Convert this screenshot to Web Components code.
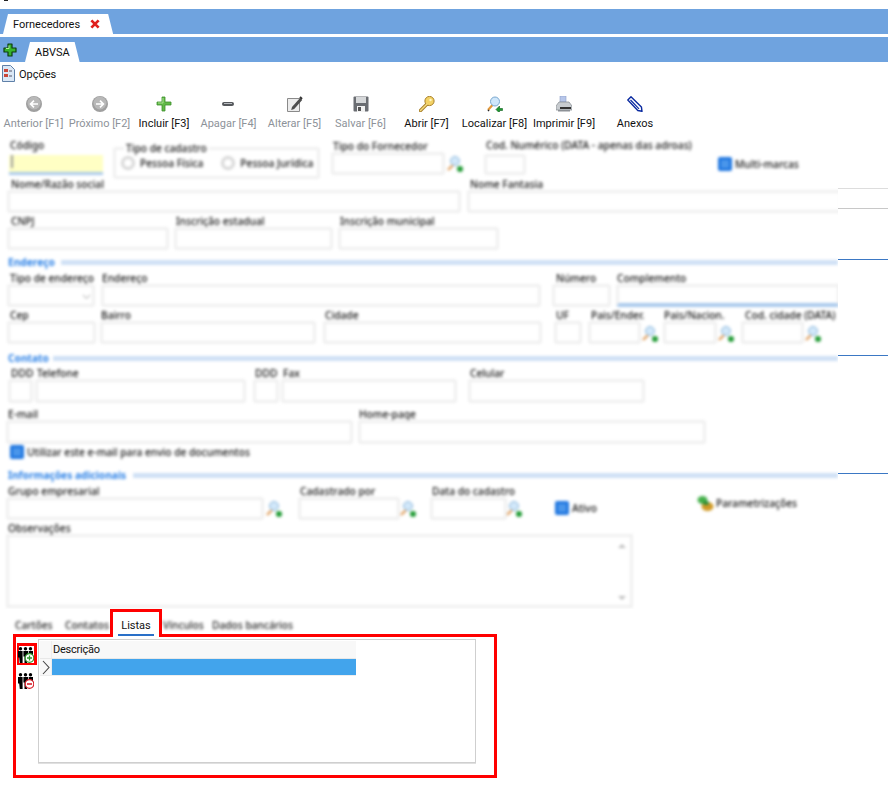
<!DOCTYPE html>
<html><head><meta charset="utf-8"><title>Fornecedores</title>
<style>
html,body{margin:0;padding:0;background:#fff}
body{width:888px;height:804px;overflow:hidden;font-family:Roboto,"Liberation Sans",sans-serif;font-size:11px;color:#111}
x-app{display:block}
</style></head><body>
<x-app>
  <x-tabbar first><x-doctab closable>Fornecedores</x-doctab></x-tabbar>
  <x-tabbar><x-icon name="addgreen" slot="lead"></x-icon><x-doctab>ABVSA</x-doctab></x-tabbar>
  <x-options>Opções</x-options>
  <x-toolbar>
    <x-tool w="67" off><x-icon name="left" slot="icon"></x-icon>Anterior [F1]</x-tool>
    <x-tool w="65" off><x-icon name="right" slot="icon"></x-icon>Próximo [F2]</x-tool>
    <x-tool w="64"><x-icon name="plus" slot="icon"></x-icon>Incluir [F3]</x-tool>
    <x-tool w="65" off><x-icon name="minus" slot="icon"></x-icon>Apagar [F4]</x-tool>
    <x-tool w="67" off><x-icon name="edit" slot="icon"></x-icon>Alterar [F5]</x-tool>
    <x-tool w="65" off><x-icon name="save" slot="icon"></x-icon>Salvar [F6]</x-tool>
    <x-tool w="67"><x-icon name="key" slot="icon"></x-icon>Abrir [F7]</x-tool>
    <x-tool w="69"><x-icon name="find" slot="icon"></x-icon>Localizar [F8]</x-tool>
    <x-tool w="70"><x-icon name="print" slot="icon"></x-icon>Imprimir [F9]</x-tool>
    <x-tool w="72"><x-icon name="clip" slot="icon"></x-icon>Anexos</x-tool>
  </x-toolbar>
  <x-main>
    <x-form>
      <x-row h="39">
        <x-field w="94" ml="9" lx="1" gap="4" bh="20" kind="active">Código</x-field>
        <x-group ml="10" mt="7" w="207" legend="Tipo de cadastro"><x-radio ml="5" tw="61">Pessoa Física</x-radio><x-radio ml="18" tw="74">Pessoa Jurídica</x-radio></x-group>
        <x-field w="114" ml="11" mt="1" lx="2" bh="23">Tipo do Fornecedor</x-field>
        <x-lens ml="2" mt="15"></x-lens>
        <x-field w="42" ml="21" lx="2" gap="3" bh="21">Cod. Numérico (DATA - apenas das adroas)</x-field>
        <x-check ml="192" mt="17">Multi-marcas</x-check>
      </x-row>
      <x-row h="34">
        <x-field w="454" ml="7" lx="4">Nome/Razão social</x-field>
        <x-field w="376" ml="6" lx="3">Nome Fantasia</x-field>
      </x-row>
      <x-row h="34" mt="3">
        <x-field w="162" ml="7" lx="4">CNPJ</x-field>
        <x-field w="159" ml="5" lx="2">Inscrição estadual</x-field>
        <x-field w="161" ml="5" lx="2">Inscrição municipal</x-field>
      </x-row>
      <x-section mt="6" gap="6">Endereço</x-section>
      <x-row h="34" mt="5">
        <x-field w="88" ml="7" lx="3" kind="combo">Tipo de endereço</x-field>
        <x-field w="440" ml="6" lx="1">Endereço</x-field>
        <x-field w="59" ml="11" lx="4">Número</x-field>
        <x-field w="224" ml="5" lx="1" kind="bar">Complemento</x-field>
      </x-row>
      <x-row h="34" mt="3">
        <x-field w="89" ml="7" lx="3">Cep</x-field>
        <x-field w="216" ml="4" lx="1">Bairro</x-field>
        <x-field w="219" ml="7" lx="2">Cidade</x-field>
        <x-field w="28" ml="12" lx="2">UF</x-field>
        <x-field w="53" ml="6" lx="3">Pais/Ender.</x-field>
        <x-lens ml="1" mt="15"></x-lens>
        <x-field w="54" ml="5" lx="1">Pais/Nacion.</x-field>
        <x-lens ml="1" mt="15"></x-lens>
        <x-field w="63" ml="7" lx="4">Cod. cidade (DATA)</x-field>
        <x-lens ml="1" mt="15"></x-lens>
      </x-row>
      <x-section mt="8" gap="4">Contato</x-section>
      <x-row h="35" mt="4">
        <x-field w="25" ml="8" lx="3" bh="24">DDD</x-field>
        <x-field w="211" ml="2" lx="2" bh="24">Telefone</x-field>
        <x-field w="26" ml="7" lx="2" bh="24">DDD</x-field>
        <x-field w="176" ml="2" lx="2" bh="24">Fax</x-field>
        <x-field w="177" ml="11" lx="2" bh="24">Celular</x-field>
      </x-row>
      <x-row h="35" mt="6">
        <x-field w="347" ml="6" lx="2" bh="24">E-mail</x-field>
        <x-field w="348" ml="5" lx="1" bh="24">Home-page</x-field>
      </x-row>
      <x-row h="14" mt="1"><x-check ml="10">Utilizar este e-mail para envio de documentos</x-check></x-row>
      <x-section mt="10" gap="7">Informações adicionais</x-section>
      <x-row h="34" mt="5">
        <x-field w="258" ml="6" lx="2">Grupo empresarial</x-field>
        <x-lens ml="2" mt="14"></x-lens>
        <x-field w="102" ml="16" lx="2">Cadastrado por</x-field>
        <x-lens ml="0" mt="14"></x-lens>
        <x-field w="77" ml="14" lx="2">Data do cadastro</x-field>
        <x-lens ml="-1" mt="14"></x-lens>
        <x-check ml="33" mt="15">Ativo</x-check>
        <x-param ml="100" mt="9">Parametrizações</x-param>
      </x-row>
      <x-memo mt="3" ml="6" w="627">Observações</x-memo>
    </x-form>
    <x-gutter></x-gutter>
  </x-main>
  <x-tabs>
    <x-tab ml="15" w="37">Cartões</x-tab>
    <x-tab ml="13" w="43">Contatos</x-tab>
    <x-tab ml="2" active w="52">Listas</x-tab>
    <x-tab ml="1" w="37">Vínculos</x-tab>
    <x-tab ml="12" w="80">Dados bancários</x-tab>
  </x-tabs>
  <x-panel>
    <x-iconbtn marked slot="tools"><x-icon name="groupadd"></x-icon></x-iconbtn>
    <x-iconbtn slot="tools"><x-icon name="groupdel"></x-icon></x-iconbtn>
    <x-grid slot="grid">Descrição</x-grid>
  </x-panel>
</x-app>
<script>
const FONT='11px/14px Roboto,"Liberation Sans",sans-serif';
const GROUP=`<g fill="#000"><circle cx="2.500" cy="1.700" r="1.700"/><circle cx="7.500" cy="1.700" r="1.700"/><circle cx="12.500" cy="1.700" r="1.700"/><path d="M0 4h4.600v12H1.800L1.200 10.500H0zM5.400 4h4.800v5.500H9v6.500H6.500V9.500H5.400zM10.900 4H15v6h-4.100z"/></g>`;
const ICONS={
addgreen:`<svg viewBox="0 0 16 16" width="16" height="16"><path d="M6 2h4v4h4v4h-4v4H6v-4H2V6h4z" fill="#36b32c" stroke="#0d3d0d" stroke-width="1.200" stroke-linejoin="round"/><path d="M7 3.500v3H4" fill="none" stroke="#aef09a" stroke-width="1"/></svg>`,
left:`<svg viewBox="0 0 16 16" width="16" height="16"><circle cx="8" cy="8" r="8" fill="#9f9f9f"/><circle cx="8" cy="7" r="6.500" fill="#b8b8b8"/><path d="M12 8H5M8 4.600 4.600 8 8 11.400" fill="none" stroke="#fff" stroke-width="1.700"/></svg>`,
right:`<svg viewBox="0 0 16 16" width="16" height="16"><circle cx="8" cy="8" r="8" fill="#9f9f9f"/><circle cx="8" cy="7" r="6.500" fill="#b8b8b8"/><path d="M4 8h7M8 4.600 11.400 8 8 11.400" fill="none" stroke="#fff" stroke-width="1.700"/></svg>`,
plus:`<svg viewBox="0 0 16 16" width="16" height="16"><path d="M6 1h3v5h6v3H9v6H6V9H1V6h5z" fill="#62b948" stroke="#3c8f2c" stroke-width=".8"/><path d="M7 2v5H2" fill="none" stroke="#a6e08e"/></svg>`,
minus:`<svg viewBox="0 0 16 16" width="16" height="16"><rect x="1" y="6" width="12" height="4" rx="2" fill="#55585c"/><rect x="3" y="7" width="8" height="1" fill="#b9bcc0"/></svg>`,
edit:`<svg viewBox="0 0 16 16" width="16" height="16"><path d="M.5 2.500h12v13H.5z" fill="#ececec" stroke="#8a8a8a"/><path d="M5 11 13 2l2.200 2-8 9-3 1z" fill="#4d4d4d"/><path d="M13 1l2 2" stroke="#333" stroke-width="2"/></svg>`,
save:`<svg viewBox="0 0 16 16" width="16" height="16"><rect x=".5" y=".5" width="15" height="15" rx="1" fill="#6a6d72"/><rect x="3" y="1" width="10" height="6" fill="#d6d8da"/><rect x="4" y="10" width="8" height="6" fill="#f2f2f2"/><rect x="5" y="11" width="3" height="4" fill="#555"/></svg>`,
key:`<svg viewBox="0 0 16 16" width="16" height="16"><path d="M1.500 14.500 8 8" stroke="#a9802a" stroke-width="3.400" stroke-linecap="round"/><circle cx="10.500" cy="5" r="4.600" fill="#f3d266" stroke="#a9802a"/><path d="M1.500 14.500 8 8" stroke="#f6dc80" stroke-width="1.400" stroke-linecap="round"/><circle cx="11.500" cy="4" r="1.200" fill="#fff7c8"/></svg>`,
find:`<svg viewBox="0 0 16 16" width="16" height="16"><path d="M1 14 5.500 9" stroke="#e39a3d" stroke-width="2.200"/><path d="M1 14l1 1" stroke="#222" stroke-width="1.500"/><circle cx="8" cy="5.500" r="4.500" fill="#cfe7fb" stroke="#7aa8cf"/><path d="M15.500 12.500h-3v-2.500l-3.500 3.500 3.500 3.500v-2.500h3z" fill="#1f9a33" stroke="#0c5b1a" stroke-width=".6"/></svg>`,
print:`<svg viewBox="0 0 16 16" width="16" height="16"><path d="M4 0h6v6H4z" fill="#b7c6ea" stroke="#8e9ec8" stroke-width=".6"/><path d="M3 6h10l3 4v4H0v-4z" fill="#c8ccd0" stroke="#81868c" stroke-width=".7"/><path d="M4 11h11v2H4z" fill="#333"/><path d="M2 14h12v1.500H2z" fill="#8d9196"/></svg>`,
clip:`<svg viewBox="0 0 16 16" width="16" height="16"><path d="M4 .8 .8 4l10 10.500 4.200.8-.6-4.400z" fill="#fff" stroke="#0a2aa0" stroke-width="1.400" stroke-linejoin="round"/><path d="M3.500 4 12 12.800" stroke="#0a2aa0" stroke-width="1.200"/></svg>`,
groupadd:`<svg viewBox="0 0 16 16" width="16" height="16">${GROUP}<circle cx="11.500" cy="11" r="4.300" fill="#fff" stroke="#2f9a2f" stroke-width="1.200"/><path d="M11.500 8.500v5M9 11h5" stroke="#2f9a2f" stroke-width="1.300"/></svg>`,
groupdel:`<svg viewBox="0 0 16 16" width="16" height="16">${GROUP}<circle cx="11.500" cy="11" r="4.300" fill="#fff" stroke="#d8202a" stroke-width="1.200"/><path d="M9 11h5" stroke="#d8202a" stroke-width="1.600"/></svg>`,
lens:`<svg viewBox="0 0 16 18" width="16" height="18"><path d="M1 15l5-5" stroke="#e0a060" stroke-width="2.400"/><circle cx="8" cy="6" r="4.500" fill="#d2e8fa" stroke="#85b2d6"/><circle cx="13" cy="14" r="3" fill="#1f9a33"/></svg>`,
param:`<svg viewBox="0 0 17 17" width="17" height="17"><ellipse cx="5.500" cy="5" rx="5" ry="4" fill="#44b04a"/><ellipse cx="10.500" cy="11.500" rx="6" ry="4.500" fill="#d19a26"/><ellipse cx="9" cy="8" rx="3" ry="2" fill="#2d8a35"/></svg>`
};
const R=(tag,css,html,init)=>customElements.define(tag,class extends HTMLElement{
  connectedCallback(){ if(this.shadowRoot) return;
    const s=this.attachShadow({mode:'open'});
    const a=n=>this.getAttribute(n);
    s.innerHTML=`<style>${css}</style>`+(typeof html==='function'?html(a,this):html);
    const st=this.style;
    if(a('ml')!==null) st.marginLeft=a('ml')+'px';
    if(a('mt')!==null) st.marginTop=a('mt')+'px';
    if(init) init(a,this,s);
  }});
R('x-icon',':host{display:block;line-height:0}',a=>ICONS[a('name')]||'');
R('x-tabbar',`:host{display:flex;align-items:flex-end;height:25px;background:#6fa3df}
 :host([first]){margin:9px 0 3px;padding-left:3px}
 .lead{display:flex;align-self:center;margin:0 7px 0 2px}
 :host([first]) .lead{display:none}`,
 `<span class="lead"><slot name="lead"></slot></span><slot></slot>`);
R('x-doctab',`:host{display:flex;align-items:center;height:20px;padding:2px 10px 0 10px;box-sizing:border-box;background:#fff;font:${FONT};color:#111;clip-path:polygon(0 100%,5px 0,calc(100% - 5px) 0,100% 100%);gap:10px}
 :host([closable]){padding-right:13px}
 svg{display:block;margin-top:-3px}`,
 a=>`<slot></slot>`+(a('closable')!==null?`<svg viewBox="0 0 11 11" width="10" height="10"><path d="M1.500 1.500l8 8M9.500 1.500l-8 8" stroke="#e0201e" stroke-width="3"/></svg>`:''));
R('x-options',`:host{display:flex;height:26px;padding:3px 0 0 2px;box-sizing:border-box;gap:4px;font:11px/19px Roboto,"Liberation Sans",sans-serif;color:#111}`,
 `<svg viewBox="0 0 13 17" width="13" height="17"><path d="M.5.500h8l4 4v12H.5z" fill="#dbe8f6" stroke="#5f80a8"/><rect x="2" y="4" width="4" height="3" fill="#c9473a"/><rect x="2" y="9" width="4" height="3" fill="#c9473a"/><path d="M7 6h3M7 11h3" stroke="#556"/></svg><slot></slot>`);
R('x-toolbar',`:host{display:flex;height:47px;padding-top:8px;box-sizing:border-box}`,`<slot></slot>`);
R('x-tool',`:host{display:flex;flex-direction:column;align-items:center;flex:none;font:${FONT};color:#111;white-space:nowrap}
 :host([off]){color:#8d9299}
 .i{height:16px;margin-bottom:5px}`,
 `<div class="i"><slot name="icon"></slot></div><div><slot></slot></div>`,
 (a,h)=>{h.style.width=a('w')+'px';});
R('x-main',`:host{display:flex;height:474px}`,`<slot></slot>`);
R('x-form',`:host{display:block;width:838px;flex:none;overflow:hidden}
 .b{filter:blur(1.400px);padding-top:5px;height:474px;box-sizing:border-box;font:500 10.200px/11px "Noto Sans","Liberation Sans",sans-serif;color:#111}`,`<div class="b"><slot></slot></div>`);
R('x-gutter',`:host{display:block;flex:1}
 i{display:block;height:1px;background:#3b78c4}`,
 `<i style="margin-top:53px;background:#ddd"></i><i style="margin-top:19px;background:#c8c8c8"></i><i style="margin-top:50px"></i><i style="margin-top:95px"></i><i style="margin-top:117px"></i>`);
R('x-row',`:host{display:flex;align-items:flex-start}`,`<slot></slot>`,(a,h)=>{h.style.height=a('h')+'px';});
R('x-field',`:host{display:block;flex:none;white-space:nowrap}
 .l{height:11px}
 .box{box-sizing:border-box;border:3px solid #f0f0f0;border-radius:3px;background:#fff;position:relative}
 :host([kind=active]) .box{background:#ffffc4;border:0;border-bottom:3px solid #a9c9ec;border-radius:0}
 :host([kind=active]) .box::before{content:"";display:block;width:2px;height:13px;background:#999;margin:2px 0 0 2px}
 :host([kind=bar]) .box{border-bottom:4px solid #a9c9ec}
 .c{display:none}
 :host([kind=combo]) .c{display:block;position:absolute;right:2px;top:6px;width:7px;height:7px}`,
 a=>`<div class="l" style="padding-left:${a('lx')||0}px"><slot></slot></div><div class="box" style="margin-top:${a('gap')||0}px;height:${a('bh')||23}px"><svg class="c" viewBox="0 0 7 7"><path d="M0 2l3.500 3.500L7 2" fill="none" stroke="#999"/></svg></div>`,
 (a,h)=>{h.style.width=a('w')+'px';});
R('x-lens',`:host{display:block;flex:none;width:16px;height:18px;line-height:0}`,ICONS.lens);
R('x-group',`:host{display:block;flex:none;height:32px;box-sizing:border-box;border:3px solid #f0f0f0;border-radius:3px;position:relative}
 .lg{position:absolute;left:8px;top:-7px;background:#fff;padding:0 2px;white-space:nowrap}
 .in{display:flex;padding-top:6px}`,
 a=>`<div class="lg">${a('legend')}</div><div class="in"><slot></slot></div>`,(a,h)=>{h.style.width=a('w')+'px';});
R('x-radio',`:host{display:flex;align-items:center;flex:none;gap:5px;white-space:nowrap}
 i{display:block;width:14px;height:14px;box-sizing:border-box;border:3px solid #d6d6d6;border-radius:50%;background:#fff}`,
 `<i></i><slot></slot>`);
R('x-check',`:host{display:flex;align-items:center;flex:none;gap:3px;white-space:nowrap}
 i{display:block;box-sizing:border-box;width:14px;height:14px;border-radius:2px;border:3px solid #1f76e0;background:#4a96ea}`,
 `<i></i><slot></slot>`);
R('x-param',`:host{display:flex;align-items:center;flex:none;gap:2px;white-space:nowrap}`,ICONS.param+`<slot></slot>`);
R('x-section',`:host{display:flex;align-items:center;height:12px;color:#2a80e6;font-weight:700;white-space:nowrap;margin-left:8px}
 i{display:block;flex:1;height:5px;background:#cfe0f5}`,a=>`<slot></slot><i style="margin-left:${a('gap')}px"></i>`);
R('x-memo',`:host{display:block;white-space:nowrap}
 .box{box-sizing:border-box;height:74px;border:3px solid #f0f0f0;background:#fff;display:flex;flex-direction:column;justify-content:space-between;align-items:flex-end;padding:6px 4px 4px 0}
 svg{display:block}`,
 `<div style="height:11px;padding-left:2px"><slot></slot></div><div class="box"><svg viewBox="0 0 8 5" width="8" height="5"><path d="M0 5l4-4 4 4z" fill="#bdbdbd"/></svg><svg viewBox="0 0 8 5" width="8" height="5"><path d="M0 0l4 4 4-4z" fill="#bdbdbd"/></svg></div>`,
 (a,h)=>{h.style.width=a('w')+'px';});
R('x-tabs',`:host{display:flex;align-items:flex-start;height:28px;position:relative;z-index:1;font:${FONT}}`,`<slot></slot>`);
R('x-tab',`:host{display:block;flex:none;box-sizing:border-box;white-space:nowrap;color:#333;text-align:center}
 .t{padding-top:9px}
 :host(:not([active])) .t{filter:blur(1.400px);font:500 10.200px/14px "Noto Sans","Liberation Sans",sans-serif;color:#222}
 :host([active]){height:28px;border:3px solid #f00;border-bottom:0;background:#fff;color:#111}
 :host([active]) .t{padding-top:7px}
 u{display:block;height:2px;background:#2a70c8;margin:1px 5px 0}`,
 a=>`<div class="t"><slot></slot></div>`+(a('active')!==null?'<u></u>':''),
 (a,h)=>{h.style.width=a('w')+'px';});
R('x-panel',`:host{display:flex;box-sizing:border-box;width:484px;height:144px;margin:-3px 0 0 13px;border:3px solid #f00;padding-top:2px}
 .tools{width:22px;flex:none;display:flex;flex-direction:column;padding:4px 0 0 1px;box-sizing:border-box;gap:8px}`,
 `<div class="tools"><slot name="tools"></slot></div><slot name="grid"></slot>`);
R('x-iconbtn',`:host{display:block;box-sizing:border-box;margin-left:1px;width:16px;height:16px}
 :host([marked]){margin-left:0;width:20px;height:22px;border:solid #f00;border-width:3px 3px 2px 2px;padding-top:1px}
 :host([marked]) .w{margin-left:-1px}`,`<div class="w"><slot></slot></div>`);
R('x-grid',`:host{display:block;box-sizing:border-box;width:438px;height:124px;border:1px solid #cfcfcf;box-shadow:0 1px 0 #e0e0e0;background:#fff;padding:1px;font:11px/18px Roboto,"Liberation Sans",sans-serif;letter-spacing:-.25px;color:#111}
 .h,.s{display:flex;width:316px}
 .h{height:17px;background:#f8f8f8;border-bottom:1px solid #e8e8e8}
 .n{width:12px;flex:none;background:#f8f8f8;border-right:1px solid #eee;box-sizing:border-box;display:flex;align-items:center;justify-content:center}
 .d{padding-left:1px}
 .s{height:17px;border-bottom:1px solid #eee;box-sizing:border-box}
 .v{flex:1;background:#42a4ec}`,
 `<div class="h"><div class="n"></div><div class="d"><slot></slot></div></div><div class="s"><div class="n"><svg viewBox="0 0 8 15" width="8" height="15"><path d="M1 1l6 6.500L1 14" fill="none" stroke="#444" stroke-width="1.100"/></svg></div><div class="v"></div></div>`);
customElements.define('x-app',class extends HTMLElement{connectedCallback(){if(!this.shadowRoot){this.attachShadow({mode:'open'}).innerHTML='<style>:host{display:block}.m{width:4px;height:1px;margin-left:4px;background:#222;margin-bottom:-1px}</style><div class="m"></div><slot></slot>';}}});
</script>
</body></html>
